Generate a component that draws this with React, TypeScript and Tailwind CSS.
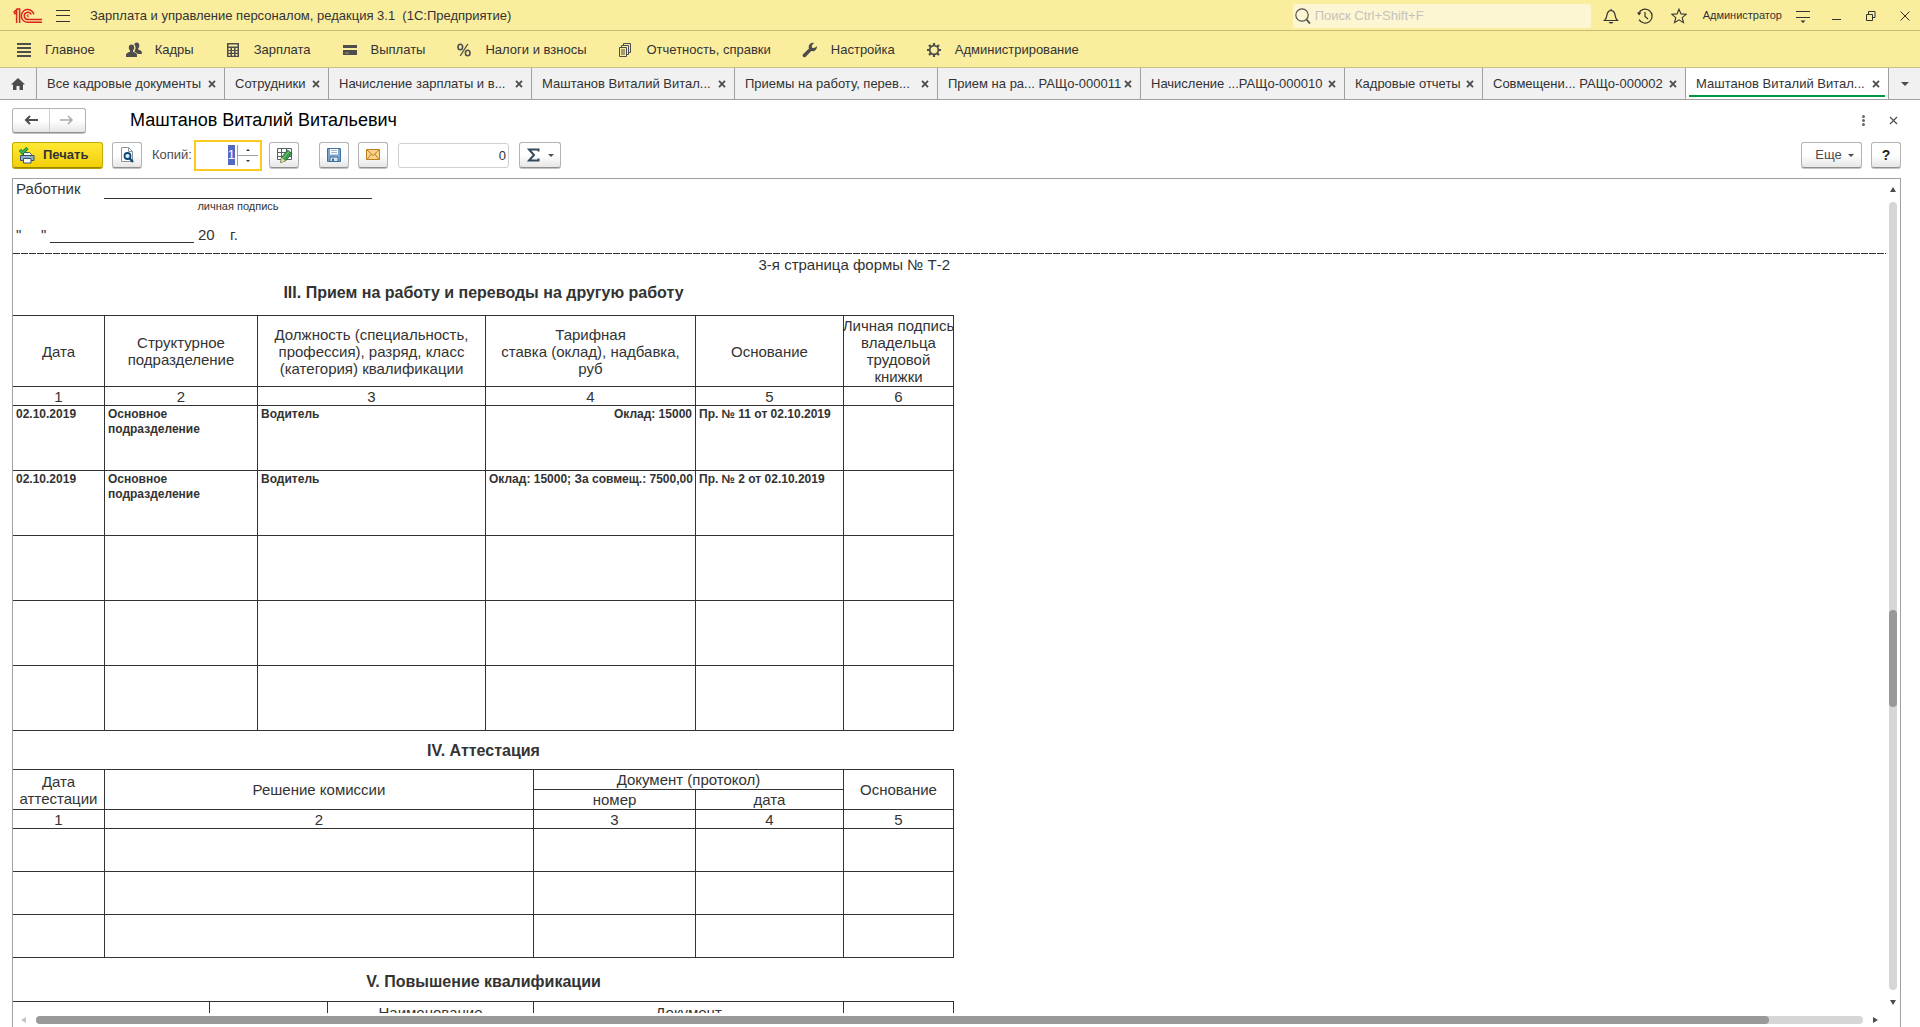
import { useEffect, useRef, type ReactNode } from 'react';

const menu = [
  { title: 'Главное', icon: <MainIcon /> },
  { title: 'Кадры', icon: <PeopleIcon /> },
  { title: 'Зарплата', icon: <CalcIcon /> },
  { title: 'Выплаты', icon: <CardIcon /> },
  { title: 'Налоги и взносы', icon: <PercentIcon /> },
  { title: 'Отчетность, справки', icon: <ReportsIcon /> },
  { title: 'Настройка', icon: <WrenchIcon /> },
  { title: 'Администрирование', icon: <GearIcon /> },
];

const tabs = [
  { title: 'Все кадровые документы', width: 'w-[188px]' },
  { title: 'Сотрудники', width: 'w-[104px]' },
  { title: 'Начисление зарплаты и в...', width: 'w-[203px]' },
  { title: 'Маштанов Виталий Витал...', width: 'w-[203px]' },
  { title: 'Приемы на работу, перев...', width: 'w-[203px]' },
  { title: 'Прием на ра... РАЩо-000011', width: 'w-[203px]' },
  { title: 'Начисление ...РАЩо-000010', width: 'w-[204px]' },
  { title: 'Кадровые отчеты', width: 'w-[138px]' },
  { title: 'Совмещени... РАЩо-000002', width: 'w-[203px]' },
  { title: 'Маштанов Виталий Витал...', width: 'w-[203px]', active: true },
];

const transfers = [
  ['02.10.2019', 'Основное подразделение', 'Водитель', 'Оклад: 15000', 'Пр. № 11 от 02.10.2019', ''],
  ['02.10.2019', 'Основное подразделение', 'Водитель', 'Оклад: 15000; За совмещ.: 7500,00', 'Пр. № 2 от 02.10.2019', ''],
  ['', '', '', '', '', ''],
  ['', '', '', '', '', ''],
  ['', '', '', '', '', ''],
];

const cell = 'border-r border-b border-[#333] p-0';
const toolButton =
  'flex h-[26px] shrink-0 items-center justify-center rounded-[3px] border border-[#b3b3b3] border-b-[#8f8f8f] bg-linear-to-b from-white from-50% to-[#e6e6e6] shadow-[0_1px_0_#c4c4c4]';

function Logo() {
  return (
    <svg width="29" height="16" viewBox="0 0 29 16" fill="none" stroke="#d9251c" strokeWidth="1.5">
      <path d="M0.5 4.6 L3.6 1.6 V15 M1.2 6.2 L3 4.8 M3.4 1 H6.6 V15" />
      <path d="M20.9 6.4 A6.4 6.4 0 1 0 15 14.3 H29" />
      <path d="M18.2 6.6 A3.6 3.6 0 1 0 15 11.5 H29" />
      <path d="M15.8 8.7 H14.6 A1 1 0 1 1 15.8 7.2" strokeWidth="1" />
    </svg>
  );
}

function MainIcon() {
  return (
    <svg width="16" height="16" viewBox="0 0 16 16" fill="#4d4d4d">
      <path d="M1 1h14v2H1zM1 5h14v2H1zM1 9h14v2H1zM1 13h14v2H1z" />
    </svg>
  );
}

function PeopleIcon() {
  return (
    <svg width="16" height="16" viewBox="0 0 16 16" fill="#4d4d4d">
      <path d="M10.5 0.5c1.8 0 2.8 1.2 2.8 3 0 1.300-.5 2.300-1.200 3v1c1.900.7 3.700 1.200 3.700 2.600V12h-4.300c-.4-1.200-1.700-1.800-3-2.300l.3-1.500c1-1 1.300-4-.5-5.500.1-1.200.9-2.200 2.200-2.200z" />
      <path d="M5.500 2.500c1.800 0 2.700 1.200 2.700 3 0 1.300-.5 2.300-1.200 3v1.200c2 .7 4 1.300 4 3V15H0v-2.300c0-1.700 2-2.300 4-3V8.500c-.7-.7-1.200-1.700-1.200-3 0-1.800.900-3 2.700-3z" />
    </svg>
  );
}

function CalcIcon() {
  return (
    <svg width="16" height="16" viewBox="0 0 16 16">
      <path fill="#4d4d4d" fillRule="evenodd" d="M2 1h12v14H2zM3.500 2.500v2h9v-2zM3.500 6v2h2V6zM7 6v2h2V6zM10.500 6v2h2V6zM3.500 9v1.700h2V9zM7 9v1.700h2V9zM10.500 9v1.700h2V9zM3.500 12v1.700h2V12zM7 12v1.700h2V12zM10.500 12v1.700h2V12z" />
    </svg>
  );
}

function CardIcon() {
  return (
    <svg width="16" height="16" viewBox="0 0 16 16" fill="#4d4d4d">
      <path d="M1 3h14v3H1zM1 8h14v5H1z" />
      <path d="M3 11h4" stroke="#9c9874" />
    </svg>
  );
}

function PercentIcon() {
  return (
    <svg width="16" height="16" viewBox="0 0 16 16" fill="none" stroke="#4d4d4d" strokeWidth="1.6">
      <ellipse cx="4.300" cy="5" rx="2.300" ry="2.800" />
      <ellipse cx="11.700" cy="11" rx="2.300" ry="2.800" />
      <path d="M11.800 2 4.200 14" strokeWidth="1.300" />
    </svg>
  );
}

function ReportsIcon() {
  return (
    <svg width="16" height="16" viewBox="0 0 16 16" fill="none" stroke="#4d4d4d">
      <path d="M1.500 5.500h7v9h-7zM3.500 5V3.500h7v9H9M5.500 3V1.500h7v9H11" />
      <path d="M3 8h4M3 10h4M3 12h4" />
    </svg>
  );
}

function WrenchIcon() {
  return (
    <svg width="16" height="16" viewBox="0 0 16 16" fill="#4d4d4d">
      <path d="M15 4.200 12.200 6 10 5.700 9.800 3.500 12 1C9.500.3 7 2 6.700 4.500c0 .8 0 1.300.3 2L1 12.300c-1.300 1.700.7 3.700 2.500 2.600L9.300 9c3 .8 6-1.500 5.700-4.800z" />
    </svg>
  );
}

function GearIcon() {
  return (
    <svg width="16" height="16" viewBox="0 0 16 16" fill="none" stroke="#4d4d4d">
      <circle cx="8" cy="8" r="4.300" strokeWidth="1.700" />
      <path strokeWidth="2.200" d="M8 1v2.500M8 12.500V15M1 8h2.500M12.500 8H15M3 3l1.900 1.900M11.100 11.100 13 13M3 13l1.900-1.900M11.100 4.900 13 3" />
    </svg>
  );
}

function Caret() {
  return <span className="h-0 w-0 border-x-3 border-t-3 border-x-transparent border-t-[#4d4d4d]" />;
}

function CloseIcon() {
  return (
    <svg width="8" height="8" viewBox="0 0 8 8" stroke="#4d4d4d" strokeWidth="1.800">
      <path d="M1 0.800 7 7.200M7 0.800 1 7.200" />
    </svg>
  );
}

function TitleBar() {
  return (
    <header className="flex h-[31px] shrink-0 items-center border-b border-[#c9bc72] bg-[#fbed9e] pt-px pr-2.5 pl-[13px] text-[#333]">
      <Logo />
      <button aria-label="Меню" className="ml-3.5 flex h-4 w-3.5 flex-col justify-between py-0.5">
        <span className="h-px w-full bg-[#333]" />
        <span className="h-px w-full bg-[#333]" />
        <span className="h-px w-full bg-[#333]" />
      </button>
      <h1 className="ml-5 whitespace-pre text-[13px]">Зарплата и управление персоналом, редакция 3.1  (1С:Предприятие)</h1>
      <label className="ml-auto flex h-6 w-[298px] items-center rounded-[3px] bg-[#fdf6d2] pl-0.5">
        <svg width="16" height="16" viewBox="0 0 16 16" fill="none" stroke="#4d4d4d" strokeWidth="1.200">
          <circle cx="7" cy="7" r="6.200" />
          <path d="m11.500 11.500 3.500 4" strokeWidth="1.800" />
        </svg>
        <input aria-label="Поиск" placeholder="Поиск Ctrl+Shift+F" className="ml-1 min-w-0 flex-1 bg-transparent text-[13px] outline-none placeholder:text-[#c4c2bc]" />
      </label>
      <div className="ml-3 flex items-center gap-[18px]">
        <button aria-label="Уведомления">
          <svg width="16" height="16" viewBox="0 0 16 16" fill="none" stroke="#333" strokeWidth="1.200">
            <path d="M1.500 12.500C4 10.500 3.500 8 4.300 5.500 5 3.300 6.500 2.500 8 2.500s3 .8 3.700 3c.8 2.500.3 5 2.800 7zM8 2.500V1" />
            <path d="M5.500 14h5L9 15.500H7z" fill="#333" stroke="none" />
          </svg>
        </button>
        <button aria-label="История">
          <svg width="16" height="16" viewBox="0 0 16 16" fill="none" stroke="#333" strokeWidth="1.200">
            <path d="M1.700 5.200A7 7 0 1 1 2 11.600M8 4v4.500l3 2.500" />
            <path d="M0 4.500h4.500L2 7.500z" fill="#333" stroke="none" />
          </svg>
        </button>
        <button aria-label="Избранное">
          <svg width="16" height="16" viewBox="0 0 16 16" fill="none" stroke="#333" strokeWidth="1.100">
            <path d="m8 1.200 2 4.700 5.200.4-4 3.300 1.300 5L8 11.900l-4.500 2.700 1.300-5-4-3.300L6 5.900z" />
          </svg>
        </button>
      </div>
      <button className="ml-4 text-[11px]">Администратор</button>
      <button aria-label="Настройки окна" className="ml-3.5">
        <svg width="14" height="14" viewBox="0 0 14 14" fill="#333">
          <path d="M0 2h14v1H0zM0 8h14v1H0zM4.500 11.500h5L7 14z" />
        </svg>
      </button>
      <button aria-label="Свернуть" className="ml-[22px]">
        <svg width="10" height="10" viewBox="0 0 10 10" fill="#333"><path d="M0 8h9v1H0z" /></svg>
      </button>
      <button aria-label="Восстановить" className="ml-6">
        <svg width="10" height="10" viewBox="0 0 10 10" fill="none" stroke="#333">
          <path d="M0.500 3.500h6v6h-6zM2.500 3V0.500h6.500v6H7" />
        </svg>
      </button>
      <button aria-label="Закрыть" className="ml-6">
        <svg width="10" height="10" viewBox="0 0 10 10" stroke="#333"><path d="m0.500 0.500 9 9M9.500 0.500l-9 9" /></svg>
      </button>
    </header>
  );
}

function Toolbar() {
  const copies = useRef<HTMLInputElement>(null);
  useEffect(() => {
    copies.current?.focus();
    copies.current?.select();
  }, []);

  return (
    <div className="flex h-[38px] shrink-0 items-center px-3">
      <button className="flex h-[26px] w-[91px] items-center rounded-[3px] border border-[#c5a900] border-b-[#9c8600] bg-linear-to-b from-[#ffe933] to-[#f2d000] pl-1.5 text-[13px] font-bold text-[#333] shadow-[0_1px_0_#b39b00]">
        <svg width="16" height="17" viewBox="0 0 16 17" className="mr-2">
          <path d="M4.500 5.500h6l2 2V10h-8z" fill="#fff" stroke="#40586b" />
          <path d="M1.500 8.500h13.500v5H1.500z" fill="#8fb0c7" stroke="#34536b" />
          <path d="M4.500 11.500h7.500v4.500H4.500z" fill="#fff" stroke="#34536b" />
          <path d="m0.800 2.800 2.700 3L8.500 1" fill="none" stroke="#1c7a34" strokeWidth="3.200" />
          <path d="m0.800 2.800 2.700 3L8.500 1" fill="none" stroke="#3fbf55" strokeWidth="1.400" />
        </svg>
        Печать
      </button>
      <button aria-label="Просмотр" className={`${toolButton} ml-[9px] w-[30px]`}>
        <svg width="16" height="16" viewBox="0 0 16 16" fill="none">
          <path d="M2.500 0.500h7l4 4v10h-11z" fill="#fff" stroke="#8a949c" />
          <path d="M9.500 0.500v4h4" stroke="#8a949c" />
          <circle cx="8.500" cy="9" r="3" fill="#e4f1fa" stroke="#0b4a78" strokeWidth="1.800" />
          <path d="m10.500 11.300 3.500 3.700" stroke="#0b4a78" strokeWidth="2.400" />
        </svg>
      </button>
      <label htmlFor="copies" className="ml-2.5 w-[42px] text-[13px] text-[#4d4d4d]">Копий:</label>
      <div className="flex h-[31px] w-[68px] border-2 border-[#fbc91f] bg-white">
        <input
          id="copies"
          ref={copies}
          defaultValue="1"
          className="min-w-0 flex-1 pr-0.5 text-right text-[13px] text-[#333] outline-none selection:bg-[#5468c4] selection:text-white"
        />
        <div className="my-[3px] mr-0.5 flex w-[21px] flex-col border-l border-[#a0a0a0]">
          <button aria-label="Больше" className="flex flex-1 items-center justify-center border-b border-[#a0a0a0]">
            <span className="h-0 w-0 border-x-2 border-b-2 border-x-transparent border-b-[#333]" />
          </button>
          <button aria-label="Меньше" className="flex flex-1 items-center justify-center">
            <span className="h-0 w-0 border-x-2 border-t-2 border-x-transparent border-t-[#333]" />
          </button>
        </div>
      </div>
      <button aria-label="Редактирование" className={`${toolButton} ml-[7px] w-[30px]`}>
        <svg width="17" height="16" viewBox="0 0 17 16" fill="none">
          <path d="M1.500 1.500h14v11h-14z" fill="#fff" stroke="#555f66" />
          <path d="M1.500 5.500h14M1.500 9.500h14M5.500 1.500v11M10.500 1.500v11" stroke="#555f66" />
          <path d="m4.500 15.500 1-5L11.500 3l4.500 3.500-6.500 7.500z" fill="#3c9b4c" stroke="#24662f" strokeWidth="0.800" />
          <path d="m7 11.500 6-7" stroke="#7fd08a" />
          <path d="m4.500 15.500 1-5 4 3.500z" fill="#f3c99a" />
        </svg>
      </button>
      <button aria-label="Сохранить" className={`${toolButton} ml-5 w-[30px]`}>
        <svg width="14" height="14" viewBox="0 0 14 14">
          <path d="M0.500 0.500h13v13h-13z" fill="#7ba6cf" stroke="#41709c" />
          <path d="M3 1h8v5.500H3z" fill="#fff" />
          <path d="M4 2.500h6M4 4.500h6" stroke="#9fb6ca" />
          <path d="M3 9h8v4.500H3z" fill="#d9e4ee" stroke="#41709c" />
          <path d="M5 10.500h2v3H5z" fill="#41709c" />
        </svg>
      </button>
      <button aria-label="Отправить" className={`${toolButton} ml-[9px] w-[30px]`}>
        <svg width="14" height="12" viewBox="0 0 14 12" fill="none" stroke="#bd7f1e">
          <path d="M0.500 0.500h13v10h-13z" fill="#fbd38a" />
          <path d="m1 1 6 5.500L13 1M1 10.500 5.300 5M13 10.500 8.700 5" />
        </svg>
      </button>
      <input aria-label="Сумма" defaultValue="0" className="ml-2.5 h-[25px] w-[111px] rounded-[3px] border border-[#d0d0d0] pr-0.5 text-right text-[13px] text-[#333]" />
      <button aria-label="Итоги" className={`${toolButton} ml-2.5 w-[42px] gap-2`}>
        <svg width="13" height="14" viewBox="0 0 13 14" fill="none" stroke="#34495e" strokeWidth="2">
          <path d="M11.500 3.500V1.500H2l5 5.500-5 5.500h9.500v-2" />
        </svg>
        <Caret />
      </button>
      <button className={`${toolButton} ml-auto w-[61px] gap-1.5 pl-1.5 text-[13px] text-[#4d4d4d]`}>
        Еще
        <Caret />
      </button>
      <button className={`${toolButton} ml-[9px] w-[30px] text-[14px] font-bold text-[#222]`}>?</button>
    </div>
  );
}

function SectionTitle({ children, className }: { children: ReactNode; className: string }) {
  return <h3 className={`flex w-[941px] items-center justify-center text-[16px] font-bold ${className}`}>{children}</h3>;
}

function DocTable({ cols, children }: { cols: ReactNode; children: ReactNode }) {
  return (
    <table className="w-[941px] table-fixed border-separate border-spacing-0 border-t border-[#333] text-center text-[15px] leading-[17px]">
      <colgroup>{cols}</colgroup>
      {children}
    </table>
  );
}

function Document() {
  return (
    <div className="min-h-0 min-w-0 flex-1 overflow-hidden text-[15px] leading-[17px] text-[#333]">
      <div className="flex h-5">
        <span className="w-[91px] pt-px pl-[3px]">Работник</span>
        <span className="w-[268px] border-b border-[#333]" />
      </div>
      <div className="w-[450px] text-center text-[11px] leading-[14px]">личная подпись</div>
      <div className="mt-2.5 flex h-5 items-end">
        <span className="w-[25px] pl-[3px]">"</span>
        <span className="w-3 pl-[3px]">"</span>
        <span className="w-36 self-stretch border-b border-[#333]" />
        <span className="w-9 pl-1">20</span>
        <span>г.</span>
      </div>
      <div className="mt-2.5 h-px bg-[repeating-linear-gradient(90deg,#333_0_7px,transparent_7px_8px)]" />
      <p className="flex h-5 w-[941px] items-center justify-end pr-1">3-я страница формы № Т-2</p>

      <SectionTitle className="h-[41px] pb-1">III. Прием на работу и переводы на другую работу</SectionTitle>
      <DocTable
        cols={<><col className="w-[92px]" /><col className="w-[153px]" /><col className="w-[228px]" /><col className="w-[210px]" /><col className="w-[148px]" /><col className="w-[110px]" /></>}
      >
        <thead>
          <tr className="h-[71px]">
            <th className={`${cell} font-normal`}>Дата</th>
            <th className={`${cell} font-normal`}>Структурное<br />подразделение</th>
            <th className={`${cell} font-normal`}>Должность (специальность,<br />профессия), разряд, класс<br />(категория) квалификации</th>
            <th className={`${cell} font-normal`}>Тарифная<br />ставка (оклад), надбавка,<br />руб</th>
            <th className={`${cell} font-normal`}>Основание</th>
            <th className={`${cell} font-normal`}>
              <div className="-mx-1 whitespace-nowrap">Личная подпись<br />владельца<br />трудовой<br />книжки</div>
            </th>
          </tr>
          <tr className="h-[19px]">
            {[1, 2, 3, 4, 5, 6].map((n) => <th key={n} className={`${cell} font-normal`}>{n}</th>)}
          </tr>
        </thead>
        <tbody className="text-[12px] leading-[15px] font-bold">
          {transfers.map((row, i) => (
            <tr key={i} className="h-[65px]">
              {row.map((value, j) => (
                <td key={j} className={`${cell} px-[3px]! pt-px! align-top ${j === 3 ? 'text-right whitespace-nowrap' : 'text-left'}`}>{value}</td>
              ))}
            </tr>
          ))}
        </tbody>
      </DocTable>

      <SectionTitle className="h-[38px]">IV. Аттестация</SectionTitle>
      <DocTable
        cols={<><col className="w-[92px]" /><col className="w-[429px]" /><col className="w-[162px]" /><col className="w-[148px]" /><col className="w-[110px]" /></>}
      >
        <thead>
          <tr className="h-5">
            <th rowSpan={2} className={`${cell} font-normal`}>Дата<br />аттестации</th>
            <th rowSpan={2} className={`${cell} font-normal`}>Решение комиссии</th>
            <th colSpan={2} className={`${cell} font-normal`}>Документ (протокол)</th>
            <th rowSpan={2} className={`${cell} font-normal`}>Основание</th>
          </tr>
          <tr className="h-5">
            <th className={`${cell} font-normal`}>номер</th>
            <th className={`${cell} font-normal`}>дата</th>
          </tr>
          <tr className="h-[19px]">
            {[1, 2, 3, 4, 5].map((n) => <th key={n} className={`${cell} font-normal`}>{n}</th>)}
          </tr>
        </thead>
        <tbody>
          {[0, 1, 2].map((i) => (
            <tr key={i} className="h-[43px]">
              {[0, 1, 2, 3, 4].map((j) => <td key={j} className={cell} />)}
            </tr>
          ))}
        </tbody>
      </DocTable>

      <SectionTitle className="h-[43px] pt-1">V. Повышение квалификации</SectionTitle>
      <DocTable
        cols={<><col className="w-[197px]" /><col className="w-[118px]" /><col className="w-[206px]" /><col className="w-[310px]" /><col className="w-[110px]" /></>}
      >
        <thead>
          <tr className="h-10 align-top">
            <th className={cell} />
            <th className={cell} />
            <th className={`${cell} pt-0.5! font-normal`}>Наименование</th>
            <th className={`${cell} pt-0.5! font-normal`}>Документ</th>
            <th className={cell} />
          </tr>
        </thead>
      </DocTable>
    </div>
  );
}

export default function App() {
  return (
    <div className="flex h-screen flex-col overflow-hidden bg-white font-['Liberation_Sans',Arial,sans-serif]">
      <TitleBar />

      <nav className="flex h-[37px] shrink-0 items-center gap-[31px] border-b border-[#c9c083] bg-[#fbed9e] pt-0.5 pl-4 text-[13px] text-[#333]">
        {menu.map((item) => (
          <a key={item.title} href="#" className="flex items-center gap-[13px] whitespace-nowrap">
            {item.icon}
            {item.title}
          </a>
        ))}
      </nav>

      <div className="flex h-8 shrink-0 border-b border-[#a0a0a0] bg-[#f1f1f1] text-[13px] text-[#333]">
        <button aria-label="Начальная страница" className="flex w-[37px] items-center justify-center border-r border-[#a0a0a0]">
          <svg width="14" height="12" viewBox="0 0 14 12" fill="#4d4d4d">
            <path d="M7 0 0 6.500h2V12h3.500V8h3v4H12V6.500h2z" />
          </svg>
        </button>
        {tabs.map((tab, i) => (
          <div key={i} className={`relative flex items-center justify-between border-r border-[#a0a0a0] pr-2 pl-2.5 ${tab.width} ${tab.active ? 'bg-white' : ''}`}>
            <button className="whitespace-nowrap">{tab.title}</button>
            <button aria-label="Закрыть вкладку"><CloseIcon /></button>
            {tab.active && <span className="absolute inset-x-[3px] bottom-0.5 h-0.5 bg-[#009646]" />}
          </div>
        ))}
        <button aria-label="Список вкладок" className="flex flex-1 items-center justify-center">
          <span className="h-0 w-0 border-x-4 border-t-4 border-x-transparent border-t-[#4d4d4d]" />
        </button>
      </div>

      <div className="flex h-9 shrink-0 items-center pt-1 pr-[22px] pl-3">
        <div className="flex h-[25px] w-[74px] rounded-[3px] border border-[#b3b3b3] border-b-[#8f8f8f] bg-linear-to-b from-white from-50% to-[#e6e6e6] shadow-[0_1px_0_#c4c4c4]">
          <button aria-label="Назад" className="flex flex-1 items-center justify-center border-r border-[#d0d0d0]">
            <svg width="14" height="10" viewBox="0 0 14 10" fill="none" stroke="#4d4d4d" strokeWidth="2"><path d="M14 5H2M6 1 2 5l4 4" /></svg>
          </button>
          <button aria-label="Вперед" className="flex flex-1 items-center justify-center">
            <svg width="14" height="10" viewBox="0 0 14 10" fill="none" stroke="#a8a8a8" strokeWidth="1.500"><path d="M0 5h12M8 1l4 4-4 4" /></svg>
          </button>
        </div>
        <h2 className="ml-11 text-[18px] text-black">Маштанов Виталий Витальевич</h2>
        <button aria-label="Действия" className="ml-auto flex flex-col gap-px">
          <span className="size-[3px] rounded-full bg-[#666]" />
          <span className="size-[3px] rounded-full bg-[#666]" />
          <span className="size-[3px] rounded-full bg-[#666]" />
        </button>
        <button aria-label="Закрыть форму" className="ml-6">
          <svg width="9" height="9" viewBox="0 0 9 9" stroke="#4d4d4d" strokeWidth="1.200"><path d="m1 1 7 7M8 1 1 8" /></svg>
        </button>
      </div>

      <div className="shrink-0 pr-[7px] pb-1"><Toolbar /></div>

      <main className="mr-[19px] ml-3 flex min-h-0 flex-1 flex-col border-x border-t border-[#a0a0a0]">
        <div className="flex min-h-0 flex-1">
          <Document />
          <div className="flex w-3.5 flex-col items-center pt-2 pb-2">
            <span className="h-0 w-0 border-x-3 border-b-5 border-x-transparent border-b-[#4d4d4d]" />
            <div className="my-2.5 flex w-2 flex-1 flex-col rounded-full bg-[#d6d6d6]">
              <div className="grow-[408]" />
              <div className="grow-[97] rounded-full bg-[#999]" />
              <div className="grow-[283]" />
            </div>
            <span className="h-0 w-0 border-x-3 border-t-5 border-x-transparent border-t-[#4d4d4d]" />
          </div>
        </div>
        <div className="flex h-3.5 shrink-0 items-center pr-[22px] pl-2">
          <span className="h-0 w-0 border-y-3 border-r-5 border-y-transparent border-r-[#c4c4c4]" />
          <div className="mx-2.5 flex h-2 flex-1 rounded-full bg-[#d6d6d6]">
            <div className="grow-[1733] rounded-full bg-[#999]" />
            <div className="grow-[94]" />
          </div>
          <span className="h-0 w-0 border-y-3 border-l-5 border-y-transparent border-l-[#4d4d4d]" />
        </div>
      </main>
    </div>
  );
}
